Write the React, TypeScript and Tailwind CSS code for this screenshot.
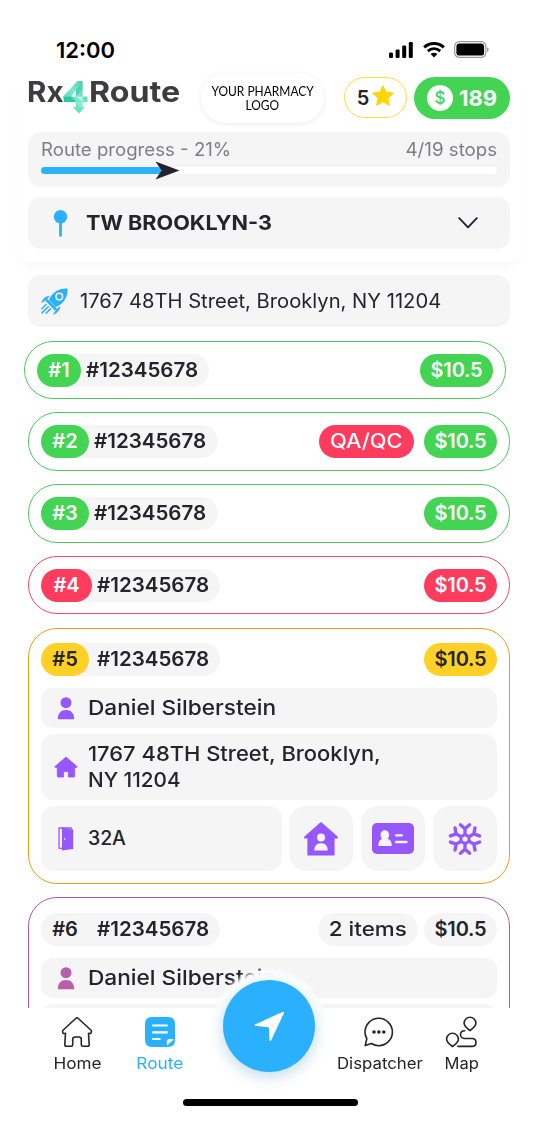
import React from "react";
import type { ReactNode } from "react";

const INK = "text-[#24242a]";

function StatusBar() {
  return (
    <div className="flex h-[73px] items-start justify-between pt-[35px] pr-[49px] pl-[56px]">
      <span className="text-[22px] leading-[30px] font-semibold text-black">12:00</span>
      <div className="flex items-center pt-[6px]">
        <svg width="24" height="16" viewBox="0 0 24 16" className="mr-[10px]">
          <rect x="0" y="10.5" width="4" height="5.5" rx="1.2" />
          <rect x="6.6" y="7.4" width="4" height="8.6" rx="1.2" />
          <rect x="13.2" y="3.6" width="4" height="12.4" rx="1.2" />
          <rect x="19.8" y="0" width="4" height="16" rx="1.2" />
        </svg>
        <svg width="22" height="16" viewBox="0 0 22 16" fill="none" stroke="#000" className="mr-[9px]">
          <path d="M1.2 5.4C6.8 .3 15.2 .3 20.8 5.4" strokeWidth="3" />
          <path d="M4.8 9.1C8.4 5.9 13.6 5.9 17.2 9.1" strokeWidth="2.8" />
          <path d="M11 15.6 7.6 12.1C9.5 10.4 12.5 10.4 14.4 12.1Z" fill="#000" stroke="none" />
        </svg>
        <svg width="35" height="17" viewBox="0 0 35 17">
          <rect x=".6" y=".6" width="31.3" height="15.8" rx="4.8" fill="none" stroke="#000" strokeOpacity=".4" strokeWidth="1.2" />
          <rect x="2.4" y="2.4" width="27.7" height="12.2" rx="3.2" />
          <path d="M33.2 6.2c1.900.9 1.900 3.900 0 4.700z" fillOpacity=".45" />
        </svg>
      </div>
    </div>
  );
}

function LogoFour() {
  return (
    <svg width="26" height="33" viewBox="0 0 26 33" className="mt-[8px] shrink-0">
      <defs>
        <linearGradient id="four" x1="0" y1="1" x2="1" y2="0">
          <stop offset="0" stopColor="#35cfa9" />
          <stop offset=".55" stopColor="#7deacb" />
          <stop offset="1" stopColor="#3fc9a8" />
        </linearGradient>
      </defs>
      <path d="M14.500 0H19.500V15.500H24.500V21H19.500V26.500L22.500 25.500 16 32.500 9.500 25.500 13 26.500V21H1L0 15.500Z M13 15.500V9L8 15.500Z" fill="url(#four)" fillRule="evenodd" />
      <path d="M13 9 19.500 1V8L13 15.500Z" fill="#4fd3b2" />
      <path d="M13 15.500H19.500V21Z" fill="#b2f7e4" />
      <path d="M1 16 8 15.500 13 21H1Z" fill="#2cc6a1" />
      <path d="M13 21H19.500V26.500L16 25Z" fill="#8aeed3" />
    </svg>
  );
}

function BrandRow() {
  return (
    <div className="flex h-[50px]">
      <div className="flex w-[173px] text-[29px] leading-[38px] font-bold text-[#3d3d3f]">
        <span className="-ml-[1px] w-[36px] origin-left scale-x-[1.02]">Rx</span>
        <LogoFour />
        <span className="origin-left scale-x-[1.11]">Route</span>
      </div>
      <div className="flex h-[50px] w-[123px] flex-col items-center justify-center rounded-[25px] bg-white pb-[1px] font-[Lato] text-[13px] leading-[14px] whitespace-nowrap text-black shadow-[0_1px_5px_rgba(0,0,0,0.09)]">
        <span className="scale-x-[0.92]">YOUR PHARMACY</span>
        <span className="scale-x-[0.92]">LOGO</span>
      </div>
      <div className="mt-[4px] ml-[20px] flex h-[41px] w-[63px] items-center justify-center gap-[3px] rounded-full border-[1.500px] border-[#ffdc3a]">
        <span className={"text-[20px] font-semibold " + INK}>5</span>
        <svg width="22" height="22" viewBox="0 0 22 22" className="-mt-[3px]">
          <path d="M11 1.200 13.800 7.600 20.800 8.300 15.500 13 17.100 19.900 11 16.300 4.900 19.900 6.500 13 1.200 8.300 8.200 7.600Z" fill="#ffd60a" stroke="#ffd60a" strokeWidth="1.600" strokeLinejoin="round" />
        </svg>
      </div>
      <div className="mt-[4px] ml-[7px] flex h-[42px] w-[96px] items-center rounded-full bg-[#42d452] pl-[13px]">
        <span className="flex size-[26px] items-center justify-center rounded-full bg-white text-[17px] leading-none font-medium text-[#42d452]">$</span>
        <span className="ml-[6px] text-[22px] font-bold text-white">189</span>
      </div>
    </div>
  );
}

function ProgressCard() {
  return (
    <div className="mt-[9px] flex h-[55px] flex-col rounded-[13px] bg-[#f5f5f5] px-[13px] pt-[6px]">
      <div className="flex justify-between text-[18px] leading-[24px] text-[#7e7e82]">
        <span className="origin-left scale-x-[1.035]">Route progress - 21%</span>
        <span className="origin-right scale-x-[1.04]">4/19 stops</span>
      </div>
      <div className="mt-[5px] flex h-[7px] items-center rounded-full bg-white">
        <div className="h-full w-[120px] rounded-full bg-[#2bb0fd]" />
        <svg width="25" height="19" viewBox="0 0 25 19" className="-ml-[6px] shrink-0">
          <path d="M.5.5 24.500 9.500 .5 18.500 6.500 9.500Z" fill="#23232b" />
        </svg>
      </div>
    </div>
  );
}

function RouteSelect() {
  return (
    <div className="mt-[10px] flex h-[52px] items-center rounded-[13px] bg-[#f5f5f5] pr-[32px] pl-[25px]">
      <svg width="15" height="27" viewBox="0 0 15 27">
        <circle cx="7.500" cy="6.800" r="6.700" fill="#2bb0fd" />
        <path d="M7.500 12V26.500" stroke="#2bb0fd" strokeWidth="2.800" />
      </svg>
      <span className={"mr-auto ml-[18px] origin-left scale-x-[1.055] text-[20.5px] font-bold " + INK}>TW BROOKLYN-3</span>
      <svg width="20" height="12" viewBox="0 0 20 12" fill="none" stroke="#24242a" strokeWidth="1.900" strokeLinecap="round" strokeLinejoin="round">
        <path d="M1.200 1.200 10 10.300 18.800 1.200" />
      </svg>
    </div>
  );
}

function Rocket() {
  return (
    <svg width="27" height="27" viewBox="0 0 27 27" className="shrink-0">
      <path d="M26.500.5C19.500 0 13.500 2.800 9.600 8.700L7.900 12 14.900 19 18.300 17.300C24.200 13.400 27 7.500 26.500.5Z" fill="#2bb0fd" />
      <circle cx="18.300" cy="8.600" r="3.300" fill="none" stroke="#f5f5f5" strokeWidth="1.500" />
      <path d="M6.300 12.800 14.200 20.700" stroke="#2bb0fd" strokeWidth="2.700" strokeLinecap="round" />
      <path d="M8.300 8.300C4.800 8.300 2.300 10.500.7 14.500L5.300 11.800ZM18.700 18.700C18.700 22.200 16.500 24.700 12.500 26.300L15.200 21.700Z" fill="#2bb0fd" stroke="#2bb0fd" strokeWidth=".6" strokeLinejoin="round" />
      <path d="M5 16.500.8 20.700M7.200 18.700 1 24.900M9.400 20.900 5.100 25.200" stroke="#2bb0fd" strokeWidth="1.500" strokeLinecap="round" />
    </svg>
  );
}

type Tone = "green" | "red" | "yellow" | "purple";
const BORDER: Record<Tone, string> = {
  green: "border-[#4fc95d]",
  red: "border-[#f04b69]",
  yellow: "border-[#ea9f14]",
  purple: "border-[#ad5ba5]",
};
const PILL: Record<Tone, string> = {
  green: "bg-[#42d452] text-white",
  red: "bg-[#ff3b5e] text-white",
  yellow: "bg-[#ffd025] text-[#24242a]",
  purple: "bg-[#f5f5f6] text-[#24242a]",
};

interface StopProps {
  tone: Tone;
  num: string;
  numClass: string;
  idClass: string;
  cardClass: string;
  extra?: ReactNode;
  children?: ReactNode;
}

function Stop({ tone, num, numClass, idClass, cardClass, extra, children }: StopProps) {
  return (
    <div className={"shrink-0 rounded-[29px] border bg-white px-[12px] " + BORDER[tone] + " " + cardClass}>
      <div className="flex h-[33px] items-center gap-[10px] text-[20px] leading-[33px] font-semibold">
        <div className="mr-auto flex rounded-full bg-[#f5f5f6]">
          <span className={"rounded-full text-center " + PILL[tone] + " " + numClass}>{num}</span>
          <span className={INK + " " + idClass}>
            <span className="inline-block w-[112px] origin-left scale-x-[1.027]">#12345678</span>
          </span>
        </div>
        {extra}
        <span className={"w-[73px] rounded-full text-center tracking-[-0.2px] " + PILL[tone]}>$10.5</span>
      </div>
      {children}
    </div>
  );
}

function Person({ color }: { color: string }) {
  return (
    <svg width="18" height="23" viewBox="0 0 18 23" fill={color}>
      <circle cx="9" cy="5.700" r="5.500" />
      <path d="M.8 22.200C.8 16.300 4 13 9 13S17.200 16.300 17.200 22.200Z" />
    </svg>
  );
}

function NameRow({ color }: { color: string }) {
  return (
    <div className="flex h-[40px] items-center rounded-[12px] bg-[#f5f5f5]">
      <span className="flex w-[47px] justify-center pl-[3px]"><Person color={color} /></span>
      <span className={"origin-left scale-x-[1.105] text-[20.5px] font-medium " + INK}>Daniel Silberstein</span>
    </div>
  );
}

const TILE = "flex w-[64px] items-center justify-center rounded-[17px] bg-[#f5f5f5]";

function CurrentStopDetails() {
  return (
    <div className="mt-[12px] flex flex-col gap-[6px]">
      <NameRow color="#9657ff" />
      <div className="flex h-[66px] items-center rounded-[13px] bg-[#f5f5f5]">
        <span className="flex w-[47px] justify-center pl-[3px]">
          <svg width="24" height="22" viewBox="0 0 24 22">
            <path d="M12 1 1 10.500Q.5 11.300 1.500 11.500H3.300V20Q3.300 21 4.300 21H9.600V16.500Q9.600 15.500 10.600 15.500H13.400Q14.400 15.500 14.400 16.500V21H19.700Q20.700 21 20.700 20V11.500H22.500Q23.500 11.300 23 10.500Z" fill="#9657ff" stroke="#9657ff" strokeWidth=".8" strokeLinejoin="round" />
          </svg>
        </span>
        <span className={"flex flex-col text-[20.5px] leading-[26px] font-medium " + INK}>
          <span className="origin-left scale-x-[1.07]">1767 48TH Street, Brooklyn,</span>
          <span className="origin-left scale-x-[1.01]">NY 11204</span>
        </span>
      </div>
      <div className="flex h-[65px] gap-[8px]">
        <div className="-mr-[1px] flex flex-1 items-center rounded-[13px] bg-[#f5f5f5]">
          <span className="flex w-[47px] justify-center pl-[3px]">
            <svg width="16" height="24" viewBox="0 0 16 24">
              <path d="M1 21.500V1H14" fill="none" stroke="#9657ff" strokeWidth="1.300" />
              <path d="M1 21.300H4" stroke="#9657ff" strokeWidth="1.300" />
              <path d="M4 .6 15.200 2.500V22L4 23.500Z" fill="#9657ff" />
              <circle cx="6.700" cy="12" r=".8" fill="#fff" />
            </svg>
          </span>
          <span className={"text-[19.5px] font-medium tracking-[-0.1px] " + INK}>32A</span>
        </div>
        <div className={TILE}>
          <svg width="34" height="34" viewBox="0 0 34 34">
            <path d="M17 .8 .8 15V16H4V33H30V16H33.200V15Z" fill="#9657ff" stroke="#9657ff" strokeWidth="1.200" strokeLinejoin="round" />
            <circle cx="17" cy="15.500" r="4" fill="#f5f5f5" />
            <path d="M10.300 28.500C10.300 23.800 12.500 21.200 17 21.200S23.700 23.800 23.700 28.500Z" fill="#f5f5f5" />
          </svg>
        </div>
        <div className={TILE}>
          <svg width="42" height="31" viewBox="0 0 42 31">
            <rect width="42" height="31" rx="5" fill="#9657ff" />
            <path d="M8.500 11.500a4.300 4.300 0 0 1 8.600 0c0 2-.7 3.500-1.500 4.500 3 .8 4.200 3 4.200 7H6.300c0-4 1.200-6.200 3.900-7-1-1-1.700-2.500-1.700-4.500Z" fill="#f5f5f5" />
            <path d="M24 12.300H30M24 19H34.500" stroke="#f5f5f5" strokeWidth="2.300" strokeLinecap="round" />
          </svg>
        </div>
        <div className={TILE}>
          <svg width="34" height="34" viewBox="-17 -17 34 34" fill="none" stroke="#9657ff" strokeWidth="3.400" strokeLinecap="round" strokeLinejoin="round">
            <circle r="4.100" strokeWidth="3" />
            {[30, 90, 150, 210, 270, 330].map((a) => (
              <path key={a} transform={`rotate(${a - 30})`} d="M0-5V-10.200M-4.600-14.200 0-10.200 4.600-14.200" />
            ))}
          </svg>
        </div>
      </div>
    </div>
  );
}

interface NavItemProps {
  label: string;
  className: string;
  labelClass: string;
  children: ReactNode;
}

function NavItem({ label, className, labelClass, children }: NavItemProps) {
  return (
    <div className={"flex flex-col items-center text-[16px] leading-[20px] whitespace-nowrap " + className}>
      <svg width="32" height="32" viewBox="0 0 32 32" fill="none" stroke="#24242a" strokeWidth="1.600" strokeLinecap="round" strokeLinejoin="round" className="-ml-[2px]">
        {children}
      </svg>
      <span className={"mt-[5px] " + labelClass}>{label}</span>
    </div>
  );
}

function BottomNav() {
  return (
    <nav className="relative h-[124px] shrink-0 bg-white">
      <div className="absolute top-[-38px] left-[213px] size-[112px] rounded-full bg-white blur-[2px]" />
      <div className={"relative flex items-start pt-[8px] pl-[53px] " + INK}>
        <NavItem label="Home" className="w-[49px]" labelClass="scale-x-[1.07]">
          <path d="M16 1.900Q16.700 1.900 17.300 2.500L29.800 14Q31 15.300 30.200 16.700 29.300 18 27.500 17.300L28.200 28.500Q28.200 30.300 26.500 30.300H21.700Q20.300 30.300 20.300 28.800V23.500Q20.300 21 18 21H14Q11.700 21 11.700 23.500V28.800Q11.700 30.300 10.300 30.300H5.500Q3.800 30.300 3.800 28.500L4.500 17.300Q2.700 18 1.800 16.700 1 15.300 2.200 14L14.700 2.500Q15.300 1.900 16 1.900Z" />
        </NavItem>
        <NavItem label="Route" className="ml-[34px] w-[48px] text-[#2bb0fd]" labelClass="scale-x-[1.08]">
          <path d="M9 1H25Q32 1 32 8V22.500L23.500 31H9Q2 31 2 24V8Q2 1 9 1Z" fill="#2bb0fd" stroke="none" />
          <path d="M32 22.500V24Q32 31 25 31H23.500L32 22.500Z" fill="#2bb0fd" stroke="none" />
          <path d="M24.300 28V25Q24.300 23.700 25.600 23.700H29.500Z" fill="#fff" stroke="#fff" strokeWidth="1" />
          <path d="M9.200 9.500H24.700M9.200 16.300H24.700M9.200 23H17.500" stroke="#fff" strokeWidth="2.200" strokeLinecap="butt" />
        </NavItem>
        <NavItem label="Dispatcher" className="ml-[152px] w-[87px]" labelClass="scale-x-[1.05]">
          <path d="M2.300 29.300 4.300 24.300A13.700 13.700 0 1 1 8.300 28.200Z" strokeWidth="0" />
          <path d="M8.500 27.500 2.200 29.600 3.800 22.700C2.600 20.700 2 18.400 2 16A13.700 13.700 0 1 1 15.700 29.700C13.100 29.700 10.600 28.900 8.500 27.500Z" />
          <g fill="#24242a" stroke="none"><circle cx="11" cy="16" r="1.800" /><circle cx="15.900" cy="16" r="1.800" /><circle cx="20.800" cy="16" r="1.800" /></g>
        </NavItem>
        <NavItem label="Map" className="ml-[21px] w-[35px]" labelClass="scale-x-[1.03]">
          <path d="M25 14.500C22.300 12.500 19.100 10 19.100 7.200A5.900 5.900 0 0 1 30.900 7.200C30.900 10 27.700 12.500 25 14.500ZM7.500 30.500C4.800 28.500 1.600 26 1.600 23.200A5.900 5.900 0 0 1 13.400 23.200C13.400 26 10.200 28.500 7.500 30.500Z" />
          <path d="M19.700 14.700C16.700 14.700 15.500 16.500 15.500 18.700S17.500 22.500 20 22.500H27C29.500 22.500 31 24.300 31 26.500S29.500 30.400 27 30.400H13" />
        </NavItem>
      </div>
      <button className="absolute top-[-28px] left-[223px] flex size-[92px] items-center justify-center rounded-full bg-[#2bb0fd] shadow-[0_4px_15px_rgba(40,130,180,0.3)]">
        <svg width="31" height="31" viewBox="0 0 31 31">
          <path d="M1 13.500Q.2 13.800 1 14.700L14 16.200Q15 16.300 15 17.500L15.500 29.300Q16.400 30.500 17.200 29.300L30 2Q30.200 .5 28.500 .9Z" fill="#fff" />
        </svg>
      </button>
      <div className="mt-[26px] ml-[183px] h-[7px] w-[175px] rounded-full bg-black" />
    </nav>
  );
}

export default function App() {
  return (
    <div className="flex h-[1132px] w-[538px] flex-col overflow-hidden bg-white font-['Inter',sans-serif] whitespace-nowrap">
      <header className="relative shrink-0 bg-white">
        <StatusBar />
        <div className="mx-[17px] rounded-b-[14px] px-[11px] pb-[13px] shadow-[0_9px_8px_-1px_rgba(0,0,0,0.018)]">
          <BrandRow />
          <ProgressCard />
          <RouteSelect />
        </div>
      </header>
      <main className="flex min-h-0 flex-1 flex-col overflow-hidden px-[28px] pt-[13px]">
        <div className="flex h-[52px] shrink-0 items-center rounded-[13px] bg-[#f5f5f5] pl-[13px]">
          <Rocket />
          <span className={"ml-[12px] origin-left scale-x-[1.035] pt-[1px] text-[19.5px] " + INK}>1767 48TH Street, Brooklyn, NY 11204</span>
        </div>
        <Stop tone="green" num="#1" numClass="w-[44px]" idClass="pl-[5px] pr-[11px]" cardClass="mt-[14px] -ml-[4px] mr-[4px] h-[58px] pt-[12px]" />
        <Stop tone="green" num="#2" numClass="w-[48px]" idClass="pl-[5px] pr-[12px]" cardClass="mt-[13px] h-[59px] pt-[12px]"
          extra={<span className="flex w-[95px] justify-center rounded-full bg-[#ff3b5e] font-medium text-white"><span className="scale-x-[1.09]">QA/QC</span></span>} />
        <Stop tone="green" num="#3" numClass="w-[48px]" idClass="pl-[5px] pr-[12px]" cardClass="mt-[13px] h-[59px] pt-[12px]" />
        <Stop tone="red" num="#4" numClass="w-[51px]" idClass="pl-[5px] pr-[11px]" cardClass="mt-[13px] h-[58px] pt-[12px]" />
        <Stop tone="yellow" num="#5" numClass="w-[48px]" idClass="pl-[8px] pr-[11px]" cardClass="mt-[14px] h-[256px] pt-[14px]">
          <CurrentStopDetails />
        </Stop>
        <Stop tone="purple" num="#6" numClass="w-[48px]" idClass="pl-[8px] pr-[11px]" cardClass="mt-[13px] h-[257px] pt-[15px]"
          extra={<span className={"-mr-[4px] flex w-[100px] justify-center rounded-full bg-[#f5f5f6] font-medium " + INK}><span className="scale-x-[1.120]">2 items</span></span>}>
          <div className="mt-[12px] flex flex-col gap-[6px]">
            <NameRow color="#b960ad" />
            <div className="h-[66px] rounded-[13px] bg-[#f5f5f5]" />
          </div>
        </Stop>
      </main>
      <BottomNav />
    </div>
  );
}
